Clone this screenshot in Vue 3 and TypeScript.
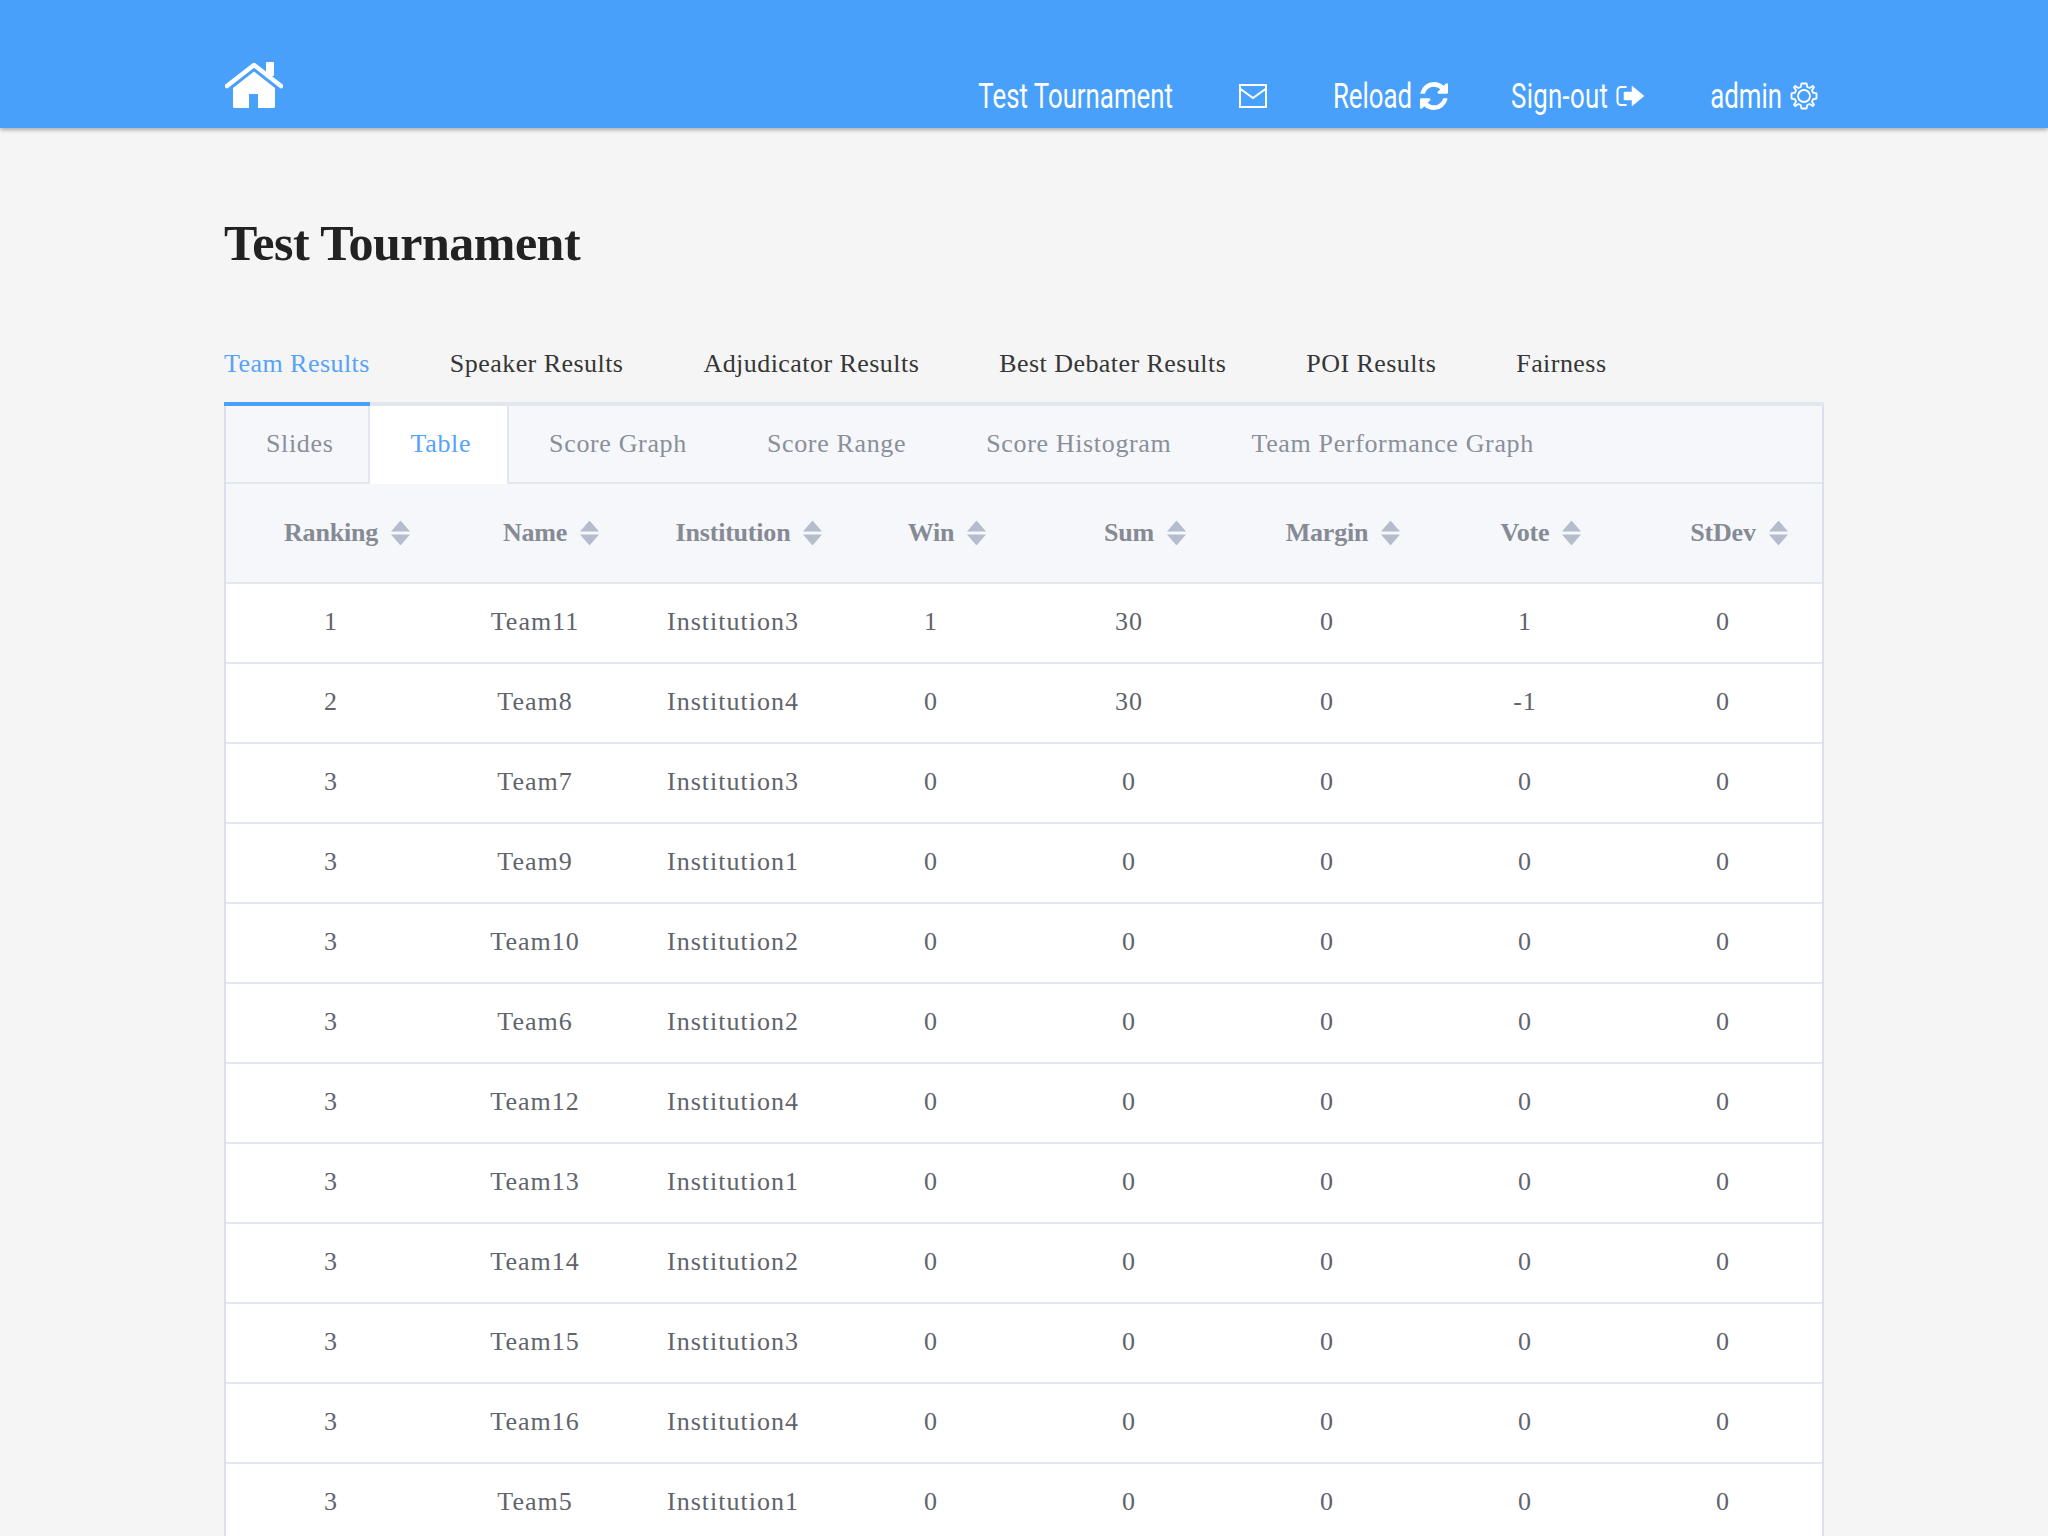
<script setup lang="ts">
interface Row {
  ranking: number;
  name: string;
  institution: string;
  win: number;
  sum: number;
  margin: number;
  vote: number;
  stdev: number;
}

const mainTabs = [
  "Team Results",
  "Speaker Results",
  "Adjudicator Results",
  "Best Debater Results",
  "POI Results",
  "Fairness",
];

const subTabs = [
  "Slides",
  "Table",
  "Score Graph",
  "Score Range",
  "Score Histogram",
  "Team Performance Graph",
];

const columns = ["Ranking", "Name", "Institution", "Win", "Sum", "Margin", "Vote", "StDev"];

const makeRow = (ranking: number, name: string, institution: string, win = 0, sum = 0, vote = 0): Row => ({
  ranking,
  name,
  institution,
  win,
  sum,
  margin: 0,
  vote,
  stdev: 0,
});

const rows: Row[] = [
  makeRow(1, "Team11", "Institution3", 1, 30, 1),
  makeRow(2, "Team8", "Institution4", 0, 30, -1),
  makeRow(3, "Team7", "Institution3"),
  makeRow(3, "Team9", "Institution1"),
  makeRow(3, "Team10", "Institution2"),
  makeRow(3, "Team6", "Institution2"),
  makeRow(3, "Team12", "Institution4"),
  makeRow(3, "Team13", "Institution1"),
  makeRow(3, "Team14", "Institution2"),
  makeRow(3, "Team15", "Institution3"),
  makeRow(3, "Team16", "Institution4"),
  makeRow(3, "Team5", "Institution1"),
];
</script>

<template>
  <div class="page">
    <header class="navbar">
      <div class="navbar__inner">
        <svg class="navbar__home" viewBox="0 0 58 46" aria-label="Home">
          <rect x="41" y="0" width="8" height="14" rx="1" fill="#fff" />
          <path d="M2 24 L29 3 L56 24" fill="none" stroke="#fff" stroke-width="4.5" stroke-linecap="round" stroke-linejoin="round" />
          <path d="M8 26 L29 9.500 L50 26 V44.500 a1.500 1.500 0 0 1 -1.500 1.500 H33 V32 H24 V46 H9.500 a1.500 1.500 0 0 1 -1.500 -1.500 Z" fill="#fff" />
        </svg>
        <nav class="navbar__menu">
          <a class="navbar__item"><span class="navbar__label">Test Tournament</span></a>
          <a class="navbar__item">
            <svg class="icon-mail" viewBox="0 0 28 24">
              <rect x="1" y="1" width="26" height="22" fill="none" stroke="#fff" stroke-width="2" />
              <path d="M1.500 5 L14 14 L26.500 5" fill="none" stroke="#fff" stroke-width="2" />
            </svg>
          </a>
          <a class="navbar__item">
            <span class="navbar__label">Reload</span>
            <svg class="icon-reload" viewBox="0 0 1536 1536">
              <path fill="#fff" d="M1511 928q0 5-1 7-64 268-268 434.500t-478 166.500q-146 0-282.500-55t-243.500-157l-129 129q-19 19-45 19t-45-19-19-45v-448q0-26 19-45t45-19h448q26 0 45 19t19 45-19 45l-137 137q71 66 161 102t187 36q134 0 250-65t186-179q11-17 53-117 8-23 30-23h192q13 0 22.500 9.500t9.500 22.500zm25-800v448q0 26-19 45t-45 19h-448q-26 0-45-19t-19-45 19-45l138-138q-148-137-349-137-134 0-250 65t-186 179q-11 17-53 117-8 23-30 23h-199q-13 0-22.500-9.500t-9.500-22.500v-7q65-268 270-434.500t480-166.500q146 0 284 55.500t245 156.500l130-129q19-19 45-19t45 19 19 45z" />
            </svg>
          </a>
          <a class="navbar__item navbar__item--signout">
            <span class="navbar__label navbar__label--wide">Sign-out</span>
            <svg class="icon-signout" viewBox="0 0 28 22">
              <path d="M10 2 H5 a3.500 3.500 0 0 0 -3.500 3.500 V16.500 A3.500 3.500 0 0 0 5 20 H10" fill="none" stroke="#fff" stroke-width="2" stroke-linecap="round" />
              <path d="M8 7 H16 V1 L28 11 L16 21 V15 H8 Z" fill="#fff" stroke="#fff" stroke-width="0.500" stroke-linejoin="round" />
            </svg>
          </a>
          <a class="navbar__item">
            <span class="navbar__label">admin</span>
            <svg class="icon-gear" viewBox="0 0 28 28">
              <circle cx="14" cy="14" r="6" fill="none" stroke="#fff" stroke-width="1.800" />
              <path d="M11.500 1.500 H16.500 L17.300 5 L19.700 6 L22.700 4 L24 5.300 L22 8.300 L23 10.700 L26.500 11.500 V16.500 L23 17.300 L22 19.700 L24 22.700 L22.700 24 L19.700 22 L17.300 23 L16.500 26.500 H11.500 L10.700 23 L8.300 22 L5.300 24 L4 22.700 L6 19.700 L5 17.300 L1.500 16.500 V11.500 L5 10.700 L6 8.300 L4 5.300 L5.300 4 L8.300 6 L10.700 5 Z" fill="none" stroke="#fff" stroke-width="1.800" stroke-linejoin="round" />
            </svg>
          </a>
        </nav>
      </div>
    </header>

    <main class="content">
      <h1 class="content__title">Test Tournament</h1>

      <ul class="main-tabs">
        <li
          v-for="(tab, index) in mainTabs"
          :key="tab"
          class="main-tabs__item"
          :class="{ 'main-tabs__item--active': index === 0 }"
        >
          {{ tab }}
        </li>
      </ul>

      <section class="panel">
        <ul class="sub-tabs">
          <li
            v-for="(tab, index) in subTabs"
            :key="tab"
            class="sub-tabs__item"
            :class="{
              'sub-tabs__item--boxed': index === 0,
              'sub-tabs__item--active': index === 1,
            }"
          >
            {{ tab }}
          </li>
        </ul>

        <table class="results">
          <colgroup>
            <col class="results__first" />
            <col v-for="n in 7" :key="n" class="results__rest" />
          </colgroup>
          <thead>
            <tr>
              <th v-for="column in columns" :key="column">
                <span class="results__head">
                  {{ column }}
                  <svg class="results__sort" viewBox="0 0 19 25">
                    <path d="M9.500 0 L19 11 H0 Z M0 14 H19 L9.500 25 Z" fill="#b5bccc" />
                  </svg>
                </span>
              </th>
            </tr>
          </thead>
          <tbody>
            <tr v-for="row in rows" :key="row.name">
              <td>{{ row.ranking }}</td>
              <td>{{ row.name }}</td>
              <td>{{ row.institution }}</td>
              <td>{{ row.win }}</td>
              <td>{{ row.sum }}</td>
              <td>{{ row.margin }}</td>
              <td>{{ row.vote }}</td>
              <td>{{ row.stdev }}</td>
            </tr>
          </tbody>
        </table>
      </section>
    </main>
  </div>
</template>

<style>
html,
body {
  margin: 0;
  background: #f5f5f5;
}
</style>

<style scoped>
.page {
  font-family: "Liberation Serif", serif;
  color: #4a4a4a;
  height: 1536px;
  overflow: hidden;
}

.navbar {
  height: 128px;
  background: #48a0fb;
  box-shadow: 0 2px 4px rgba(0, 0, 0, 0.3);
}

.navbar__inner {
  width: 1600px;
  height: 100%;
  margin: 0 auto;
  display: flex;
  justify-content: space-between;
  align-items: flex-end;
}

.navbar__home {
  width: 58px;
  height: 46px;
  margin-bottom: 20px;
  margin-left: 1px;
}

.navbar__menu {
  display: flex;
  align-items: center;
  gap: 66px;
  height: 64px;
  margin-right: 6px;
}

.navbar__item {
  display: flex;
  align-items: center;
  gap: 8px;
  color: #fff;
  font-family: "Roboto", sans-serif;
  font-size: 25.8px;
}

.navbar__item--signout {
  margin-left: -3px;
}

.navbar__label {
  display: inline-block;
  transform: scaleY(1.36);
}

.navbar__label--wide {
  letter-spacing: 0.3px;
}

.icon-mail {
  width: 28px;
  height: 24px;
}

.icon-reload {
  width: 28px;
  height: 28px;
}

.icon-signout {
  width: 28px;
  height: 22px;
}

.icon-gear {
  width: 28px;
  height: 28px;
}

.content {
  width: 1600px;
  margin: 0 auto;
}

.content__title {
  margin: 85px 0 0;
  font-size: 50px;
  line-height: 60px;
  font-weight: 700;
  letter-spacing: -0.5px;
  color: #222;
}

.main-tabs {
  list-style: none;
  display: flex;
  gap: 80px;
  margin: 57px 0 0;
  padding: 0;
  height: 72px;
  border-bottom: 4px solid #e1e6ef;
}

.main-tabs__item {
  height: 72px;
  font-size: 26px;
  line-height: 68px;
  letter-spacing: 0.45px;
  color: #363636;
}

.main-tabs__item--active {
  color: #56a2fb;
  border-bottom: 4px solid #48a0fb;
}

.panel {
  border-left: 2px solid #dbe0ec;
  border-right: 2px solid #dbe0ec;
  background: #fff;
}

.sub-tabs {
  list-style: none;
  display: flex;
  margin: 0;
  padding: 0;
  height: 78px;
  background: #f5f7fb;
  border-bottom: 2px solid #e1e6ef;
  box-sizing: border-box;
}

.sub-tabs__item {
  padding: 0 40px;
  font-size: 26px;
  line-height: 76px;
  letter-spacing: 0.65px;
  color: #8a8f99;
}

.sub-tabs__item--boxed {
  padding-right: 35px;
  border-right: 2px solid #e1e6ef;
}

.sub-tabs__item--active {
  height: 78px;
  padding-right: 36px;
  background: #fff;
  color: #56a2fb;
  border-right: 2px solid #e1e6ef;
}

.results {
  width: 1596px;
  table-layout: fixed;
  border-collapse: collapse;
}

.results__first {
  width: 210px;
}

.results__rest {
  width: 198px;
}

.results th {
  height: 98px;
  padding: 0;
  background: #f5f7fb;
  border-bottom: 2px solid #e1e6ef;
  font-size: 26px;
  letter-spacing: -0.2px;
  color: #858a94;
}

.results__head {
  position: relative;
}

.results__sort {
  position: absolute;
  left: calc(100% + 13px);
  top: 50%;
  width: 19px;
  height: 25px;
  transform: translateY(-50%);
}

.results td {
  height: 80px;
  padding: 0 0 2px;
  box-sizing: border-box;
  text-align: center;
  border-bottom: 2px solid #e1e6ef;
  font-size: 26px;
  letter-spacing: 1px;
  color: #5f636b;
}
</style>
